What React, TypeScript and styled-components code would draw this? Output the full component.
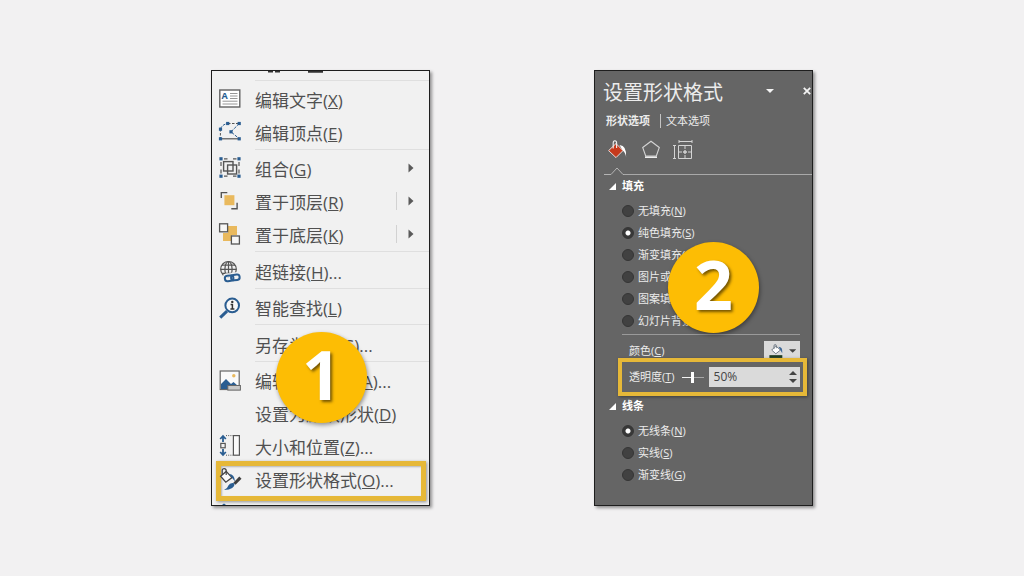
import React, { useState } from "react";
import styled, { createGlobalStyle, css } from "styled-components";

const GlobalStyle = createGlobalStyle`
  *, *::before, *::after { box-sizing: border-box; }
  body {
    margin: 0;
    background: #f2f1f2;
    font-family: "Open Sans", "Noto Sans CJK SC", sans-serif;
  }
  button, input { font: inherit; color: inherit; }
  button { padding: 0; border: 0; background: none; cursor: pointer; }
`;

const Page = styled.main`
  min-height: 100vh;
  display: flex;
  flex-wrap: wrap;
  align-items: center;
  justify-content: center;
  gap: 24px 164px;
`;

const panel = css`
  position: relative;
  flex: 0 1 219px;
  min-width: 0;
  border: 1px solid #1e1e1e;
  box-shadow: 2px 2px 3px rgba(0, 0, 0, 0.4);
`;

const MenuPanel = styled.nav`
  ${panel}
  display: flex;
  flex-direction: column;
  background: #f1f1f1;
  color: #505050;
`;

const MenuEdge = styled.div<{ $bottom?: boolean }>`
  display: flex;
  height: 9px;
  align-items: ${(p) => (p.$bottom ? "flex-end" : "flex-start")};
  padding-left: ${(p) => (p.$bottom ? 7 : 55)}px;
`;

const Separator = styled.hr<{ $roomy?: boolean }>`
  width: auto;
  height: 1px;
  margin: 0 0 ${(p) => (p.$roomy ? 3 : 2)}px 43px;
  border: 0;
  background: #dfdfdf;
`;

const MenuRow = styled.button<{ $highlighted?: boolean }>`
  position: relative;
  isolation: isolate;
  display: flex;
  align-items: center;
  gap: 14px;
  height: 33px;
  padding: 0 15px 2px 7px;
  text-align: left;
  ${(p) =>
    p.$highlighted &&
    css`
      &::before {
        content: "";
        position: absolute;
        z-index: -1;
        inset: -2px 3px -5px 4px;
        border: 5px solid #e6b838;
        box-shadow: 1px 1px 3px rgba(0, 0, 0, 0.4), inset 1px 1px 2px rgba(0, 0, 0, 0.25);
      }
    `}
`;

const IconSlot = styled.span`
  display: flex;
  flex: 0 0 22px;
  svg { display: block; overflow: visible; }
`;

const MenuLabel = styled.span`
  flex: 1;
  padding-top: 5px;
  font-size: 17px;
  line-height: 24px;
  white-space: nowrap;
`;

const SubmenuMark = styled.span<{ $split?: boolean }>`
  display: flex;
  align-items: center;
  justify-content: flex-end;
  width: 18px;
  height: 18px;
  border-left: 1px solid ${(p) => (p.$split ? "#d2d2d2" : "transparent")};
`;

const Badge = styled.span<{ $left: number; $top: number }>`
  position: absolute;
  left: ${(p) => p.$left}px;
  top: ${(p) => p.$top}px;
  z-index: 2;
  display: flex;
  align-items: center;
  justify-content: center;
  width: 91px;
  height: 91px;
  padding-bottom: 8px;
  border-radius: 50%;
  background: #fdbd04;
  box-shadow: 1px 2px 4px rgba(0, 0, 0, 0.4);
  color: #fff;
  font-size: 68px;
  font-weight: 700;
  line-height: 83px;
  text-shadow: 2px 2px 3px rgba(70, 50, 0, 0.75);
`;

const FormatPanel = styled.section`
  ${panel}
  display: flex;
  flex-direction: column;
  padding-bottom: 19px;
  background: #656565;
  color: #ececec;
  font-size: 11px;
  line-height: 14px;
`;

const TitleBar = styled.header`
  display: flex;
  align-items: center;
  height: 43px;
  padding-left: 8px;
`;

const Title = styled.h1`
  flex: 1;
  margin: 0;
  font-size: 20px;
  font-weight: 400;
  line-height: 28px;
  white-space: nowrap;
`;

const TitleButton = styled.button<{ $wide?: boolean }>`
  display: flex;
  justify-content: flex-start;
  width: ${(p) => (p.$wide ? 37 : 9)}px;
  padding-bottom: 4px;
`;

const Tabs = styled.div`
  display: flex;
  height: 14px;
  padding-left: 11px;
`;

const Tab = styled.button<{ $active?: boolean }>`
  font-weight: ${(p) => (p.$active ? 700 : 400)};
  line-height: 14px;
  & + & {
    margin-left: 10px;
    padding-left: 5px;
    border-left: 1px solid #c4c4c4;
  }
`;

const Categories = styled.div`
  display: flex;
  align-items: center;
  gap: 12px;
  height: 24px;
  margin: 10px 0 5px;
  padding-left: 12px;
`;

const CategoryButton = styled.button`
  display: flex;
  svg { display: block; }
`;

const Divider = styled.div`
  display: flex;
  height: 9px;
  padding-left: 9px;
  &::after {
    content: "";
    flex: 1;
    align-self: flex-end;
    height: 1px;
    margin-bottom: 1px;
    background: #a9a9a9;
  }
  svg { display: block; }
`;

const SectionTitle = styled.h2`
  display: flex;
  align-items: center;
  gap: 6px;
  height: 20px;
  margin: 0;
  padding-left: 14px;
  font-size: 11px;
  font-weight: 700;
  color: #fff;
`;

const Choices = styled.div`
  display: flex;
  flex-direction: column;
  margin-top: 4px;
  padding-left: 27px;
`;

const Choice = styled.label`
  display: flex;
  align-items: center;
  gap: 4px;
  height: 22px;
  white-space: nowrap;
`;

const Radio = styled.input`
  appearance: none;
  width: 12px;
  height: 12px;
  margin: 0;
  border: 1px solid #353535;
  border-radius: 50%;
  background: #414141;
  &:checked {
    background: radial-gradient(circle, #fff 0 2px, #383838 3px);
  }
`;

const ColorRow = styled.div`
  display: flex;
  justify-content: space-between;
  height: 24px;
  margin: 2px 12px 0 27px;
  padding: 6px 0 0 7px;
  border-top: 1px solid #9a9a9a;
  line-height: 20px;
`;

const ColorButton = styled.button`
  display: flex;
  align-items: center;
  gap: 4px;
  width: 36px;
  height: 20px;
  padding: 0 4px;
  background: #dadada;
`;

const Transparency = styled.div`
  position: relative;
  display: flex;
  align-items: center;
  margin: 0 5px 0 23px;
  height: 38px;
  padding: 0 3px 0 7px;
  border: 4px solid #e6b838;
  box-shadow: 1px 1px 3px rgba(0, 0, 0, 0.4);
  background: #656565;
  white-space: nowrap;
`;

const Slider = styled.input`
  appearance: none;
  width: 22px;
  height: 14px;
  margin: 0 5px 0 7px;
  background: linear-gradient(90deg, #f4f4f4 50%, #a8a8a8 50%) center / 100% 1px no-repeat;
  &::-webkit-slider-thumb {
    appearance: none;
    width: 3px;
    height: 11px;
    background: #fff;
  }
`;

const Spinner = styled.div`
  display: flex;
  flex: 1;
  min-width: 0;
  height: 20px;
  background: #dadada;
  color: #444;
`;

const SpinnerInput = styled.input`
  flex: 1;
  width: 0;
  min-width: 0;
  padding: 0 5px;
  border: 0;
  background: none;
  font-size: 12px;
`;

const Steps = styled.div`
  display: flex;
  flex-direction: column;
  justify-content: space-evenly;
  width: 15px;
`;

const Step = styled.button`
  display: flex;
  justify-content: center;
`;

const ink = "#555";
const blue = "#2a5d91";
const gold = "#e9b95d";

const Svg = ({ children }: { children: React.ReactNode }) => (
  <svg width="22" height="22" viewBox="0 0 22 22" fill="none" aria-hidden="true">
    {children}
  </svg>
);

const Dots = ({ at }: { at: [number, number][] }) => (
  <>
    {at.map(([x, y]) => (
      <rect key={`${x}-${y}`} x={x - 1.6} y={y - 1.6} width="3.2" height="3.2" fill={blue} />
    ))}
  </>
);

const TextBoxIcon = () => (
  <Svg>
    <rect x="0.8" y="2" width="20" height="17" fill="#fff" stroke="#626262" strokeWidth="1.4" />
    <text x="2.6" y="11" fontSize="9" fontWeight="700" fill={blue}>A</text>
    <path d="M11 5.5h7.5M11 8h7.5M11 10.5h7.5M3.5 13.2h15M3.5 16h15" stroke="#8a8a8a" strokeWidth="0.9" />
  </Svg>
);

const PointsIcon = () => (
  <Svg>
    <path d="M1.5 8Q3 3.5 8.7 2.5M20.3 2.5 12 10.8l8.3 7" stroke={blue} strokeDasharray="3 1.2" />
    <path d="M9 2.5h11M1.4 8v10" stroke={ink} strokeDasharray="2.5 1.5" />
    <path d="M1.4 17.8h19" stroke={ink} strokeWidth="1.2" />
    <Dots at={[[1.5, 8.2], [8.7, 2.5], [20.2, 2.5], [12, 10.8], [1.5, 17.8], [20.2, 17.8]]} />
  </Svg>
);

const GroupIcon = () => (
  <Svg>
    <path d="M5 1.8h3.5M14 1.8h3.5M5 19.2h3.5M14 19.2h3.5M2 5v4M2 12.5v4M20 5v4M20 12.5v4" stroke={ink} strokeWidth="1.2" />
    <rect x="4.6" y="4.6" width="9.4" height="9.4" stroke={ink} strokeWidth="1.4" />
    <rect x="8.6" y="8" width="9" height="9" stroke={ink} strokeWidth="1.4" />
    <Dots at={[[2, 1.8], [20, 1.8], [2, 19.2], [20, 19.2]]} />
  </Svg>
);

const FrontIcon = () => (
  <Svg>
    <rect x="5.4" y="5.2" width="10" height="10" fill={gold} />
    <path d="M2.3 8V2.6h6M12.3 18.8h5.8v-6" stroke={ink} strokeWidth="1.4" />
  </Svg>
);

const BackIcon = () => (
  <Svg>
    <path d="M9 3h9v9h-5v6H4v-8h5z" fill={gold} />
    <rect x="0.6" y="0.8" width="8" height="8" fill="#f7f7f7" stroke={ink} strokeWidth="1.3" />
    <rect x="12.4" y="13" width="8" height="8" fill="#f7f7f7" stroke={ink} strokeWidth="1.3" />
  </Svg>
);

const LinkIcon = () => (
  <Svg>
    <g stroke={ink} strokeWidth="1.2">
      <circle cx="9.5" cy="9.3" r="7.8" />
      <ellipse cx="9.5" cy="9.3" rx="3.6" ry="7.8" />
      <path d="M9.5 1.5v15.6M1.7 9.3h15.6M3 5.2h13M3 13.4h13" />
    </g>
    <g stroke="#f1f1f1" strokeWidth="4.5">
      <rect x="5.8" y="15.4" width="8.4" height="5.4" rx="2.7" />
      <rect x="12" y="14.6" width="8.4" height="5.4" rx="2.7" />
    </g>
    <g stroke={blue} strokeWidth="2">
      <rect x="5.8" y="15.6" width="8.6" height="5.4" rx="2.7" transform="rotate(-8 10 18)" />
      <rect x="12" y="14.8" width="8.6" height="5.4" rx="2.7" transform="rotate(-8 16 17)" />
    </g>
  </Svg>
);

const LookupIcon = () => (
  <Svg>
    <path d="M8 15.2 1.2 21.6" stroke={blue} strokeWidth="3" />
    <circle cx="13.2" cy="9.4" r="6.8" fill="#f8f8f8" stroke={blue} strokeWidth="2" />
    <circle cx="13.3" cy="5.9" r="1.2" fill="#333" />
    <path d="M11.6 8.5h1.8v4.4M11.4 13h4" stroke="#333" strokeWidth="1.5" />
  </Svg>
);

const PictureIcon = () => (
  <Svg>
    <rect x="1.2" y="2" width="19" height="18.5" fill="#fafafa" stroke="#666" strokeWidth="1.2" />
    <path d="M2 20v-5l5-5 5 5 2.5-2 4.5 4v3z" fill={blue} />
    <circle cx="14.8" cy="6.8" r="1.7" fill={gold} />
    <rect x="8.8" y="16.5" width="12.6" height="4.6" fill="#c8c8c8" stroke="#666" />
  </Svg>
);

const SizeIcon = () => (
  <Svg>
    <path d="M4 1v6M4 14v6M1.2 4 4 1l2.8 3M1.2 17 4 20l2.8-3" stroke={blue} strokeWidth="1.8" />
    <rect x="1.8" y="8.4" width="4.4" height="4.4" stroke={ink} strokeWidth="1.2" />
    <path d="M7 0.6h7M7 20.2h7" stroke={ink} strokeDasharray="1 1.2" />
    <rect x="14.4" y="0.6" width="6" height="19.6" fill="#fafafa" stroke={ink} strokeWidth="1.2" />
  </Svg>
);

const FormatIcon = () => (
  <Svg>
    <path d="M7.2 3.4 13 9.6l-6.2 4.6-5.2-6z" fill="#fafafa" stroke="#444" strokeWidth="1.3" />
    <path d="M3.2 7V2.8q0-2.2 2-2.2t2 2.2V7" stroke="#444" strokeWidth="1.2" />
    <path d="M10 6q5.600.4 6 7.400l-3.200-4z" fill={blue} />
    <path d="m21.400 9.6-6 6.200" stroke="#3f3f3f" strokeWidth="3" />
    <path d="M15.600 15.2q.4 6.200-10.600 6.800 3.6-1.6 4.4-4.6 1.6-3.4 6.200-2.2z" fill={blue} />
  </Svg>
);

type Item = {
  text: string;
  accel: string;
  more?: boolean;
  icon?: React.ReactNode;
  submenu?: "plain" | "split";
  highlighted?: boolean;
};

type Group = { roomy?: boolean; items: Item[] };

const menuGroups: Group[] = [
  {
    items: [
      { text: "编辑文字", accel: "X", icon: <TextBoxIcon /> },
      { text: "编辑顶点", accel: "E", icon: <PointsIcon /> },
    ],
  },
  {
    items: [
      { text: "组合", accel: "G", icon: <GroupIcon />, submenu: "plain" },
      { text: "置于顶层", accel: "R", icon: <FrontIcon />, submenu: "split" },
      { text: "置于底层", accel: "K", icon: <BackIcon />, submenu: "split" },
    ],
  },
  { roomy: true, items: [{ text: "超链接", accel: "H", more: true, icon: <LinkIcon /> }] },
  { items: [{ text: "智能查找", accel: "L", icon: <LookupIcon /> }] },
  { roomy: true, items: [{ text: "另存为图片", accel: "S", more: true }] },
  {
    items: [
      { text: "编辑替换文字", accel: "A", more: true, icon: <PictureIcon /> },
      { text: "设置为默认形状", accel: "D" },
      { text: "大小和位置", accel: "Z", more: true, icon: <SizeIcon /> },
      { text: "设置形状格式", accel: "O", more: true, icon: <FormatIcon />, highlighted: true },
    ],
  },
];

const Caption = ({ text, accel, more }: { text: string; accel: string; more?: boolean }) => (
  <>
    {text}(<u>{accel}</u>){more && "..."}
  </>
);

const ContextMenu = () => (
  <MenuPanel aria-label="形状菜单">
    <MenuEdge>
      <svg width="56" height="3" viewBox="0 0 56 3" aria-hidden="true">
        <path d="M1 0h5v1.5H1zM8 0h5v1.5H8zM41 0h15v1.8H41z" fill="#333" />
      </svg>
    </MenuEdge>
    {menuGroups.map(({ roomy, items }) => (
      <React.Fragment key={items[0].accel}>
        <Separator $roomy={roomy} />
        {items.map((item) => (
          <MenuRow key={item.accel} type="button" $highlighted={item.highlighted}>
            <IconSlot>{item.icon}</IconSlot>
            <MenuLabel>
              <Caption {...item} />
            </MenuLabel>
            {item.submenu && (
              <SubmenuMark $split={item.submenu === "split"}>
                <svg width="6" height="10" viewBox="0 0 6 10" aria-hidden="true">
                  <path d="M0.5 0.5 5.5 5 0.5 9.5z" fill="#5a5a5a" />
                </svg>
              </SubmenuMark>
            )}
          </MenuRow>
        ))}
      </React.Fragment>
    ))}
    <MenuEdge $bottom>
      <svg width="10" height="2" viewBox="0 0 10 2" aria-hidden="true">
        <path d="M3 2 5 0.5 7 2z" fill={blue} />
      </svg>
    </MenuEdge>
    <Badge $left={64} $top={261}>1</Badge>
  </MenuPanel>
);

const Caret = ({ up, color = "#444", size = 8 }: { up?: boolean; color?: string; size?: number }) => (
  <svg width={size} height={size / 2} viewBox="0 0 8 4" aria-hidden="true">
    <path d={up ? "M0 4 4 0l4 4z" : "M0 0h8L4 4z"} fill={color} />
  </svg>
);

const SectionHeading = ({ children }: { children: string }) => (
  <SectionTitle>
    <svg width="7" height="7" viewBox="0 0 7 7" aria-hidden="true">
      <path d="M7 0v7H0z" fill="#fff" />
    </svg>
    {children}
  </SectionTitle>
);

const fills = [
  { text: "无填充", accel: "N" },
  { text: "纯色填充", accel: "S" },
  { text: "渐变填充", accel: "G" },
  { text: "图片或纹理填充", accel: "P" },
  { text: "图案填充", accel: "A" },
  { text: "幻灯片背景填充", accel: "B" },
];

const lines = [
  { text: "无线条", accel: "N" },
  { text: "实线", accel: "S" },
  { text: "渐变线", accel: "G" },
];

const RadioList = ({ name, options, initial }: { name: string; options: typeof fills; initial: string }) => {
  const [value, setValue] = useState(initial);
  return (
    <Choices role="radiogroup" aria-label={name}>
      {options.map((option) => (
        <Choice key={option.accel}>
          <Radio
            type="radio"
            name={name}
            checked={value === option.accel}
            onChange={() => setValue(option.accel)}
          />
          <span>
            <Caption {...option} />
          </span>
        </Choice>
      ))}
    </Choices>
  );
};

const FormatPane = () => {
  const [alpha, setAlpha] = useState(50);
  const change = (next: number) => setAlpha(Math.min(100, Math.max(0, next || 0)));
  return (
    <FormatPanel>
      <TitleBar>
        <Title>设置形状格式</Title>
        <TitleButton type="button" aria-label="选项" $wide>
          <Caret color="#f4f4f4" />
        </TitleButton>
        <TitleButton type="button" aria-label="关闭">
          <svg width="8" height="8" viewBox="0 0 8 8" aria-hidden="true">
            <path d="m0.8 0.8 6.4 6.4M7.2 0.8 0.8 7.2" stroke="#f4f4f4" strokeWidth="1.8" />
          </svg>
        </TitleButton>
      </TitleBar>
      <Tabs>
        <Tab type="button" $active>形状选项</Tab>
        <Tab type="button">文本选项</Tab>
      </Tabs>
      <Categories>
        <CategoryButton type="button" aria-label="填充与线条">
          <svg width="22" height="22" viewBox="0 0 22 22" fill="none">
            <path d="M9 4.6 16 11.6 9 18.6 1.6 11.6z" fill="#c63a1c" stroke="#e9dcd8" strokeWidth="1" />
            <path d="M6.2 9.5V4q0-2.2 1.7-2.2T9.6 4v5" stroke="#f0f0f0" strokeWidth="1.1" />
            <path d="M12.5 6q7.6.6 6.6 12.6-.4-5-3.4-7.2z" fill="#fff" />
          </svg>
        </CategoryButton>
        <CategoryButton type="button" aria-label="效果">
          <svg width="20" height="22" viewBox="0 0 20 22" fill="none">
            <path d="M10 2.2 18.3 8.5 15.3 17H4.7L1.7 8.5z" stroke="#d4d4d4" strokeWidth="1.1" />
            <path d="M4 18.2h12" stroke="#eee" strokeWidth="1.6" />
          </svg>
        </CategoryButton>
        <CategoryButton type="button" aria-label="大小与属性">
          <svg width="22" height="22" viewBox="2 0 22 22" fill="none" stroke="#d4d4d4">
            <path d="M8 2.5h13M8 1v3M21 1v3M3.5 6v13M2 6.500h3M2 19.500h3" />
            <path d="M7.5 6.5h13v13h-13zM14 6.5v3.500M14 16v3.500M7.5 13h3.500M17 13h3.500" />
            <path d="M14 11v4M12 13h4" strokeWidth="1.4" />
          </svg>
        </CategoryButton>
      </Categories>
      <Divider>
        <svg width="20" height="9" viewBox="0 0 20 9" fill="none" aria-hidden="true">
          <path d="M0 7.5h7l6-6.5 6 6.5h1" stroke="#b4b4b4" />
        </svg>
      </Divider>
      <SectionHeading>填充</SectionHeading>
      <RadioList name="fill" options={fills} initial="S" />
      <ColorRow>
        <span>
          <Caption text="颜色" accel="C" />
        </span>
        <ColorButton type="button" aria-label="颜色">
          <svg width="18" height="16" viewBox="0 0 18 16" fill="none" aria-hidden="true">
            <path d="m8.5 2.5 5 4.5-5 4-4.5-4z" fill="#fff" stroke="#6d7782" />
            <path d="M6.5 6V2.5q0-1.5 1.3-1.5T9 2.500V5" stroke="#6d7782" />
            <path d="M11.5 3.500q4.500 0 4 7l-2.500-4z" fill="#3c6695" />
            <path d="M1.5 12.500h14v3h-14z" fill="#1f3d22" />
          </svg>
          <Caret size={8} />
        </ColorButton>
      </ColorRow>
      <Transparency>
        <label htmlFor="alpha">
          <Caption text="透明度" accel="T" />
        </label>
        <Slider
          type="range"
          min={0}
          max={100}
          value={alpha}
          aria-label="透明度滑块"
          onChange={(e) => change(Number(e.target.value))}
        />
        <Spinner>
          <SpinnerInput
            id="alpha"
            type="text"
            value={`${alpha}%`}
            onChange={(e) => change(parseInt(e.target.value, 10))}
          />
          <Steps>
            <Step type="button" aria-label="增加" onClick={() => change(alpha + 1)}>
              <Caret up />
            </Step>
            <Step type="button" aria-label="减少" onClick={() => change(alpha - 1)}>
              <Caret />
            </Step>
          </Steps>
        </Spinner>
      </Transparency>
      <SectionHeading>线条</SectionHeading>
      <RadioList name="line" options={lines} initial="N" />
      <Badge $left={73} $top={171}>2</Badge>
    </FormatPanel>
  );
};

export default function App() {
  return (
    <>
      <GlobalStyle />
      <Page>
        <ContextMenu />
        <FormatPane />
      </Page>
    </>
  );
}
